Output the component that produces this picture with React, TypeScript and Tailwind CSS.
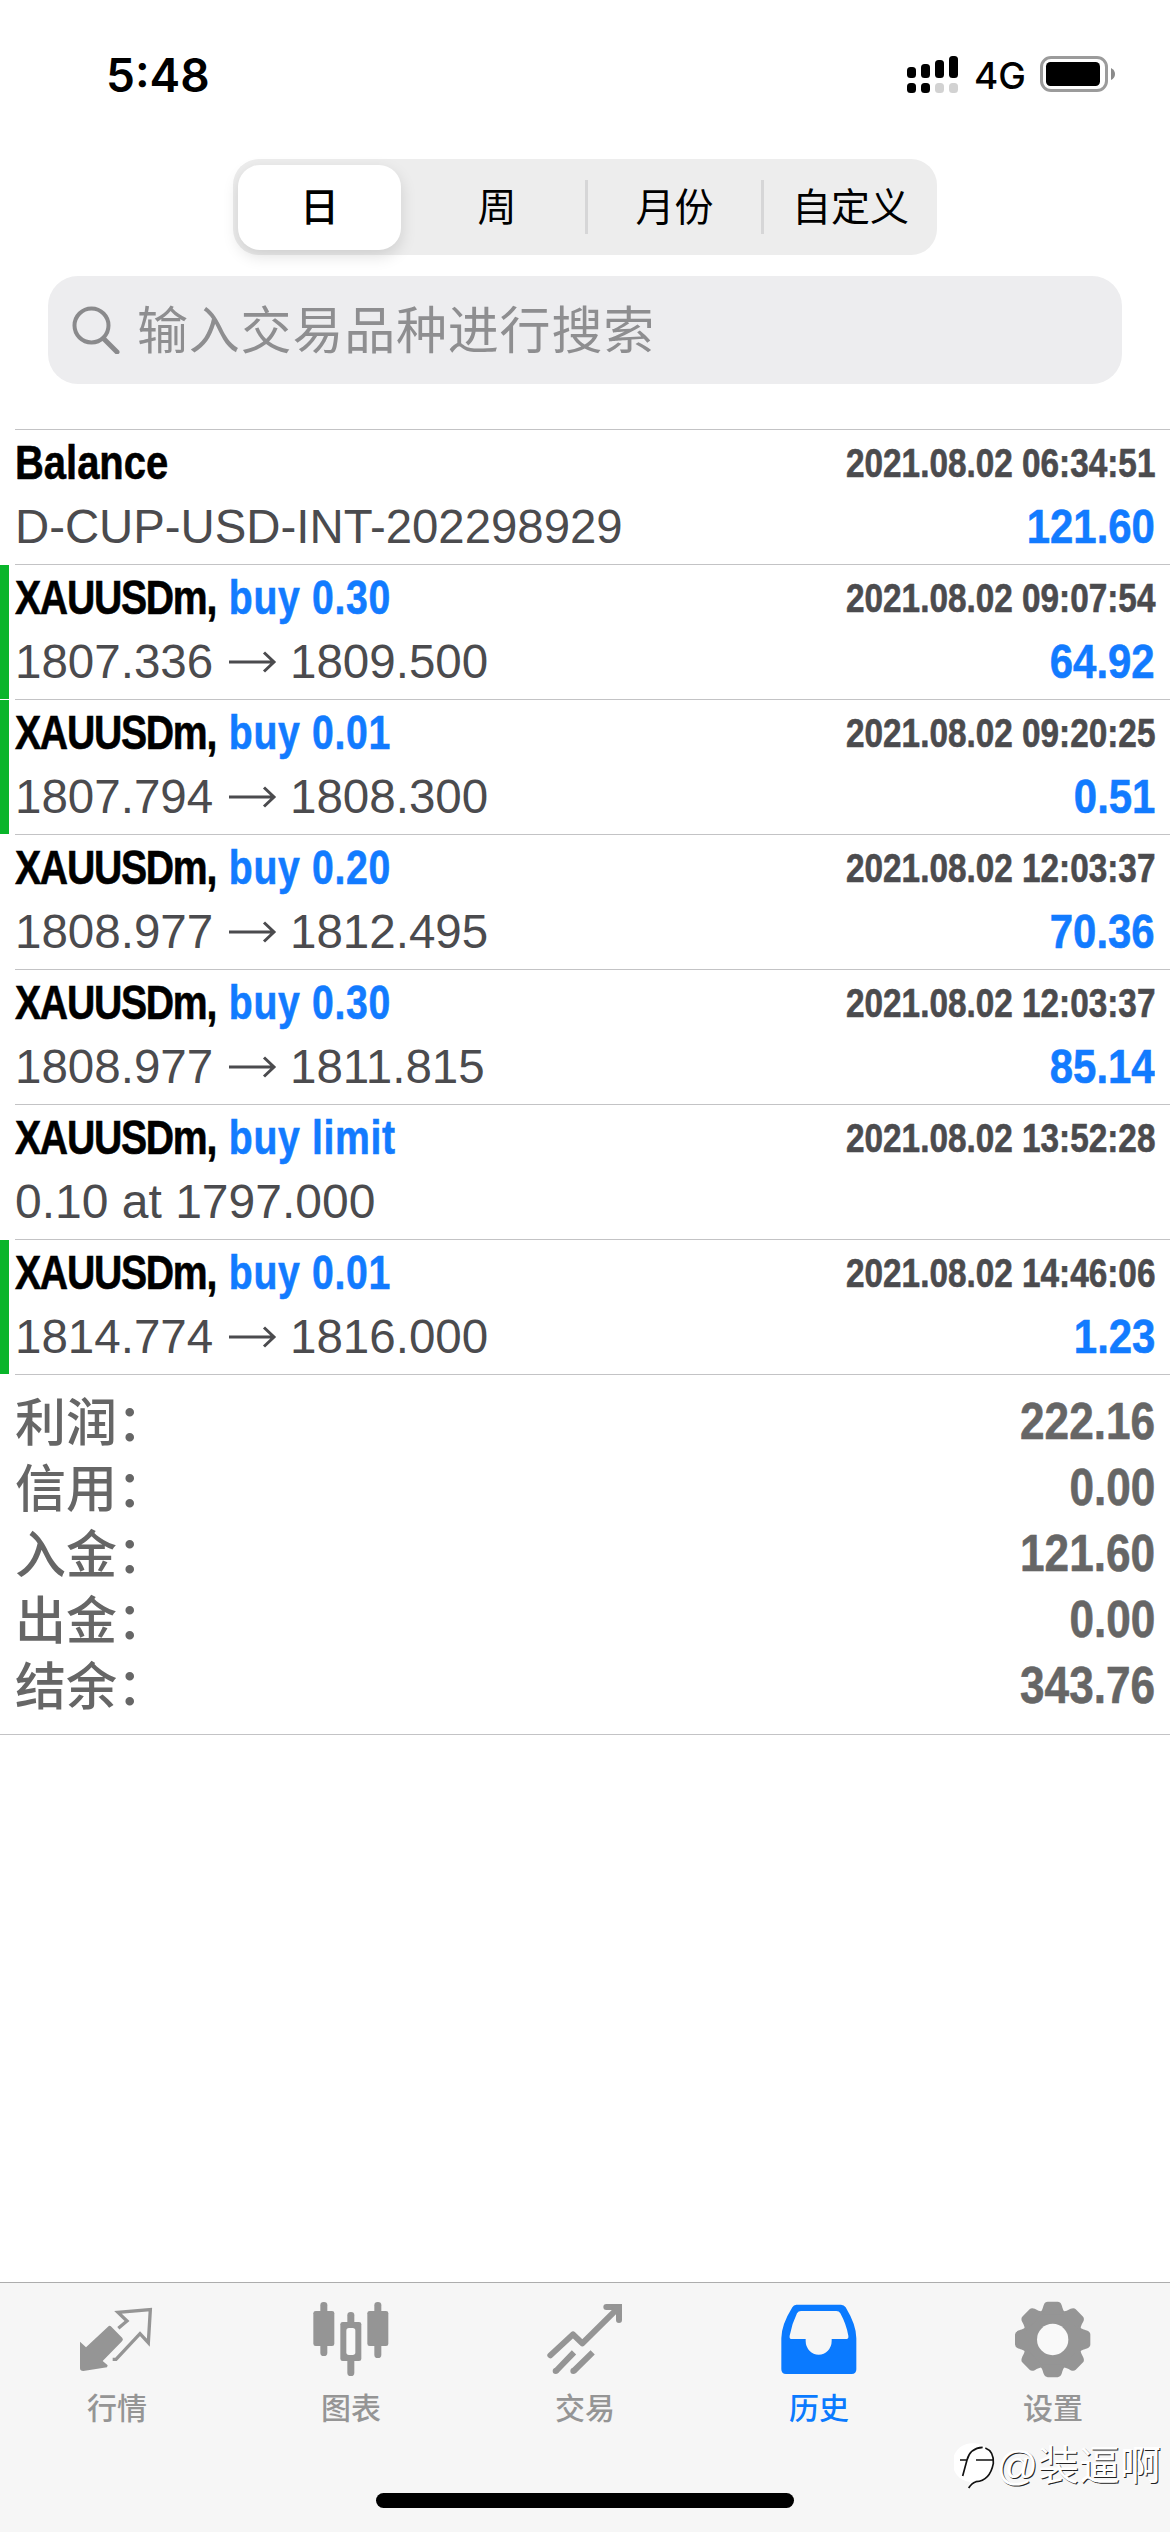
import type { ReactNode } from "react";

type Deal = {
  title: string;
  action?: string;
  time: string;
  from: string;
  to?: string;
  amount?: string;
  marked?: boolean;
};

const deals: Deal[] = [
  { title: "Balance", time: "2021.08.02 06:34:51", from: "D-CUP-USD-INT-202298929", amount: "121.60" },
  { title: "XAUUSDm,", action: "buy 0.30", time: "2021.08.02 09:07:54", from: "1807.336", to: "1809.500", amount: "64.92", marked: true },
  { title: "XAUUSDm,", action: "buy 0.01", time: "2021.08.02 09:20:25", from: "1807.794", to: "1808.300", amount: "0.51", marked: true },
  { title: "XAUUSDm,", action: "buy 0.20", time: "2021.08.02 12:03:37", from: "1808.977", to: "1812.495", amount: "70.36" },
  { title: "XAUUSDm,", action: "buy 0.30", time: "2021.08.02 12:03:37", from: "1808.977", to: "1811.815", amount: "85.14" },
  { title: "XAUUSDm,", action: "buy limit", time: "2021.08.02 13:52:28", from: "0.10 at 1797.000" },
  { title: "XAUUSDm,", action: "buy 0.01", time: "2021.08.02 14:46:06", from: "1814.774", to: "1816.000", amount: "1.23", marked: true },
];

const totals = [
  { label: "利润：", value: "222.16" },
  { label: "信用：", value: "0.00" },
  { label: "入金：", value: "121.60" },
  { label: "出金：", value: "0.00" },
  { label: "结余：", value: "343.76" },
];

function SignalIcon() {
  return (
    <svg width="52" height="38" viewBox="0 0 52 38">
      <rect x="0" y="11" width="9" height="11" rx="3.5" />
      <rect x="14" y="8" width="9" height="14" rx="3.5" />
      <rect x="28" y="4" width="9" height="18" rx="3.5" />
      <rect x="42" y="0" width="9" height="22" rx="3.5" />
      <rect x="0" y="27" width="9" height="10" rx="3.5" />
      <rect x="14" y="27" width="9" height="10" rx="3.5" />
      <rect x="28" y="27" width="9" height="10" rx="3.5" fill="#d2d2d2" />
      <rect x="42" y="27" width="9" height="10" rx="3.5" fill="#d2d2d2" />
    </svg>
  );
}

function BatteryIcon() {
  return (
    <svg width="76" height="36" viewBox="0 0 76 36">
      <rect x="1.5" y="1.5" width="65" height="33" rx="9.5" fill="none" stroke="#9b9b9b" strokeWidth="3" />
      <rect x="6" y="6" width="54" height="24" rx="4.5" />
      <path d="M71 12Q75 14 75 18T71 24Z" fill="#8a8a8a" />
    </svg>
  );
}

function QuotesIcon() {
  return (
    <svg width="76" height="78" viewBox="57 30 228 234">
      <path
        d="M60 155L78 172L144 110Q149 105 154 110L187 144Q191 149 186 154L128 213L143 226L141 232L70 243Q60 243 60 235Z"
        fill="currentColor"
      />
      <path d="M175 115L201 93L174 67L271 59L265 158L240 131L168 208H158" fill="none" stroke="currentColor" strokeWidth="10" />
    </svg>
  );
}

function ChartIcon() {
  return (
    <svg width="76" height="78" viewBox="758 30 228 234" fill="currentColor">
      <rect x="780" y="36" width="21" height="162" rx="10" />
      <rect x="759" y="63" width="63" height="105" rx="7" />
      <rect x="861" y="66" width="21" height="192" rx="10" />
      <rect x="840" y="96" width="63" height="117" rx="7" />
      <rect x="858" y="114" width="27" height="81" rx="8" fill="#f9f9f9" />
      <rect x="942" y="36" width="21" height="168" rx="10" />
      <rect x="921" y="63" width="63" height="105" rx="7" />
    </svg>
  );
}

function TradeIcon() {
  return (
    <svg width="76" height="78" viewBox="51 30 228 234" fill="none" stroke="currentColor" strokeWidth="18">
      <path d="M61 196L129 133L157 160L260 58" strokeLinecap="round" strokeLinejoin="round" />
      <path d="M229 51H267V90" strokeLinecap="round" />
      <path d="M240 46H271V80Z" fill="currentColor" stroke="none" />
      <path d="M78 243L132 187M131 243L188 187" />
      <circle cx="77" cy="243" r="9" fill="currentColor" stroke="none" />
      <circle cx="130" cy="243" r="9" fill="currentColor" stroke="none" />
    </svg>
  );
}

function HistoryIcon() {
  return (
    <svg width="76" height="78" viewBox="752 30 228 234" fill="currentColor">
      <path
        fillRule="evenodd"
        d="M798 44H932Q941 44 946 52Q978 105 978 145V238Q978 252 964 252H767Q753 252 753 238V145Q753 105 786 52Q790 44 798 44ZM812 63H918Q926 63 930 70Q948 103 954 137Q956 147 946 147H904V153A39 41 0 0 1 826 153V147H785Q776 147 778 137Q784 103 800 70Q804 63 812 63Z"
      />
    </svg>
  );
}

const teeth = [0, 45, 90, 135, 180, 225, 270, 315];

function SettingsIcon() {
  return (
    <svg width="76" height="78" viewBox="255 30 228 234" fill="currentColor">
      <g transform="translate(368 148.5)">
        <circle r="89" />
        {teeth.map((angle) => (
          <path
            key={angle}
            transform={`rotate(${angle})`}
            d="M-42 -76C-31 -86 -30 -94 -27 -103Q-23 -113 -15 -113H15Q23 -113 27 -103C30 -94 31 -86 42 -76Z"
          />
        ))}
        <circle r="47" fill="#f9f9f9" />
      </g>
    </svg>
  );
}

function WatermarkLogo() {
  return (
    <svg width="42" height="48" viewBox="64 466 126 144">
      <path d="M124 470A58 58 0 0 1 178 550Q165 580 134 586L108 605L112 586A58 58 0 0 1 124 470Z" fill="#fff" />
      <path
        d="M90 568L103 520Q112 484 150 482M82 520H103M130 520H182M158 484Q184 494 182 530Q172 582 130 585Q116 590 108 604"
        fill="none"
        stroke="#111"
        strokeWidth="5"
      />
    </svg>
  );
}

function Tab({ icon, label, active = false }: { icon: ReactNode; label: string; active?: boolean }) {
  return (
    <div className={`flex flex-1 flex-col items-center pt-[17px] ${active ? "text-[#0a7aff]" : "text-[#959595]"}`}>
      {icon}
      <span className="mt-[9px] text-[30px] leading-[44px]">{label}</span>
    </div>
  );
}

function DealRow({ deal }: { deal: Deal }) {
  return (
    <div className="flex h-[135px]">
      <div className={`mt-px w-[9px] shrink-0 ${deal.marked ? "bg-[#0ab52b]" : ""}`} />
      <div className="ml-1.5 flex-1 border-t border-[#c3c3c5] pt-[3px] pr-[15px] text-[48px] text-[#4b4b4e]">
        <div className="flex h-[60px] items-center justify-between font-bold whitespace-nowrap [-webkit-text-stroke:0.6px_currentColor]">
          {deal.action ? (
            <div className="flex w-[500px] origin-left scale-x-[0.8] gap-[16px] text-[49px]">
              <span className="tracking-[-1.6px] text-black">{deal.title}</span>
              <span className="tracking-[0.8px] text-[#127bff]">{deal.action}</span>
            </div>
          ) : (
            <span className="origin-left scale-x-[0.815] text-[49px] text-black">{deal.title}</span>
          )}
          <span className="origin-right scale-x-[0.833] text-[40px]">{deal.time}</span>
        </div>
        <div className="flex h-[67px] items-center justify-between whitespace-nowrap">
          {deal.to ? (
            <div className="flex items-center">
              <span className="w-[214px] origin-left scale-x-[0.99]">{deal.from}</span>
              <svg width="48" height="24" viewBox="0 0 48 24" fill="none" stroke="#4b4b4e" strokeWidth="3">
                <path d="M0 12H44M35 2.5L45 12L35 21.5" />
              </svg>
              <span className="ml-[13px] origin-left scale-x-[0.99]">{deal.to}</span>
            </div>
          ) : deal.amount ? (
            <span className="origin-left scale-x-[0.986]">{deal.from}</span>
          ) : (
            <span className="origin-left">{deal.from}</span>
          )}
          {deal.amount && (
            <span className="origin-right scale-x-[0.855] text-[49px] font-bold text-[#127bff] [-webkit-text-stroke:0.6px_currentColor]">
              {deal.amount}
            </span>
          )}
        </div>
      </div>
    </div>
  );
}

export default function App() {
  return (
    <div className="relative flex h-[2532px] w-[1170px] flex-col overflow-hidden bg-white font-['Liberation_Sans','Noto_Sans_CJK_SC',sans-serif]">
      <header className="flex h-[159px] shrink-0 justify-between pr-[54px] pl-[106px] font-['Inter',sans-serif]">
        <span className="mt-[47px] text-[46px] leading-[56px] font-semibold">5:48</span>
        <div className="mt-[56px] flex items-start">
          <SignalIcon />
          <span className="mt-[-2px] ml-[15px] w-[66px] text-[37px] leading-[44px] font-medium">4G</span>
          <BatteryIcon />
        </div>
      </header>

      <div className="mx-auto grid h-24 w-[704px] shrink-0 grid-cols-4 items-center rounded-[26px] bg-[#ededed] text-center text-[39px] text-black">
        <div className="ml-[5px] flex h-[85px] w-[163px] items-center justify-center rounded-[22px] bg-white pt-[3px] font-medium shadow-[0_6px_16px_rgba(0,0,0,0.13)]">
          日
        </div>
        <div className="pt-[3px]">周</div>
        <div className="flex h-[54px] items-center justify-center border-l-[3px] border-[#d6d6d7] pt-[3px]">月份</div>
        <div className="flex h-[54px] items-center justify-center border-l-[3px] border-[#d6d6d7] pt-[3px]">自定义</div>
      </div>

      <div className="mx-12 mt-[21px] flex h-[108px] shrink-0 items-center rounded-[30px] bg-[#ededef] pl-6 text-[#8e8e90]">
        <svg width="48" height="48" viewBox="0 0 48 48" fill="none" stroke="#8a8a8c" strokeWidth="4" strokeLinecap="round">
          <circle cx="19.5" cy="19.5" r="17" />
          <path d="M32 33L45 46" strokeWidth="5" />
        </svg>
        <span className="ml-[17px] pt-[5px] text-[51px] tracking-[0.8px]">输入交易品种进行搜索</span>
      </div>

      <main className="mt-[45px] flex flex-1 flex-col">
        {deals.map((deal, i) => (
          <DealRow key={i} deal={deal} />
        ))}
        <section className="border-b border-[#c3c3c5] text-[51px] text-[#666]">
          <div className="ml-[15px] border-t border-[#c3c3c5] pt-[14px] pr-[15px] pb-[15px]">
            {totals.map((row) => (
              <div key={row.label} className="flex h-[66px] items-center justify-between">
                <span className="pt-[4px] leading-[62px] font-medium">{row.label}</span>
                <span className="origin-right scale-x-[0.865] font-bold [-webkit-text-stroke:0.6px_currentColor]">
                  {row.value}
                </span>
              </div>
            ))}
          </div>
        </section>
      </main>

      <nav className="flex h-[250px] shrink-0 flex-col items-center border-t border-[#adadad] bg-[#f6f6f6]">
        <div className="flex w-full font-medium">
          <Tab icon={<QuotesIcon />} label="行情" />
          <Tab icon={<ChartIcon />} label="图表" />
          <Tab icon={<TradeIcon />} label="交易" />
          <Tab icon={<HistoryIcon />} label="历史" active />
          <Tab icon={<SettingsIcon />} label="设置" />
        </div>
        <div className="mt-auto mb-6 h-[15px] w-[418px] rounded-full bg-black" />
      </nav>

      <div className="absolute right-[9px] bottom-[38px] flex items-center text-[41px] text-white [text-shadow:1px_1px_0_#222]">
        <WatermarkLogo />
        <span className="leading-[56px]">@装逼啊</span>
      </div>
    </div>
  );
}
